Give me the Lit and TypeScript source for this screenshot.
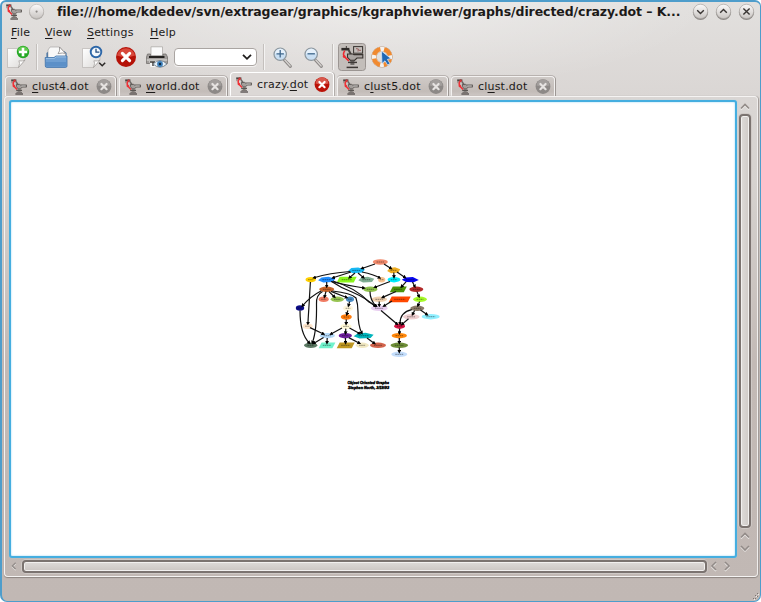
import { LitElement, html, css, svg } from "lit";
import { customElement } from "lit/decorators.js";

type Shape = "e" | "p" | "h" | "d";
type GNode = [number, number, number, string, Shape];

const NODES: GNode[] = [
  [380.3, 262, 7.5, "#f08a6c", "e"],
  [356.5, 270.4, 8.5, "#18b8f4", "h"],
  [393.7, 270.3, 6.5, "#efae22", "h"],
  [310.7, 279.7, 5.2, "#ffd000", "e"],
  [326.7, 279.7, 8.6, "#1e8cff", "h"],
  [346.7, 279.7, 10, "#8cf51c", "p"],
  [366.3, 279.7, 8, "#7fae93", "h"],
  [381.7, 279.7, 3.6, "#f6c492", "e"],
  [394, 279.7, 6.4, "#00eeff", "e"],
  [410.3, 279.7, 8.5, "#0606f0", "d"],
  [326.7, 289.3, 7.5, "#c9642a", "e"],
  [370.3, 289.3, 7.2, "#8fc24c", "e"],
  [398.3, 289.3, 8.5, "#4c920c", "p"],
  [416.3, 289.3, 7, "#b22a2a", "e"],
  [323.7, 299.3, 5, "#f07c64", "e"],
  [337.3, 299.3, 6.6, "#97c452", "e"],
  [350, 299.2, 4, "#4a8cc4", "e"],
  [379.3, 299.3, 7.8, "#efcfae", "e"],
  [399.7, 299.3, 11, "#ff4800", "p"],
  [420, 299.3, 6.8, "#a6fa2a", "e"],
  [300, 308, 4.2, "#0c0c86", "e"],
  [348, 308.3, 4.8, "#fff6da", "e"],
  [379.3, 308.3, 8.5, "#e8cdf0", "e"],
  [417.3, 308.3, 7, "#8b7a68", "e"],
  [346.3, 317, 5.5, "#ff7d0e", "e"],
  [411.3, 316.8, 8.3, "#efcfd0", "e"],
  [430.7, 316.7, 9, "#90efff", "e"],
  [307.7, 326.2, 5, "#ffe6cc", "e"],
  [346, 326.4, 5.6, "#fff8d6", "e"],
  [399.6, 326.2, 5.4, "#d41444", "e"],
  [327.3, 335.7, 7.6, "#b4dafa", "e"],
  [345.3, 335.7, 6.6, "#6c1d9c", "e"],
  [363.6, 335.7, 10, "#00b4bc", "h"],
  [399.3, 335.7, 7.6, "#ff880c", "e"],
  [310.7, 345.3, 6.6, "#5c7a64", "e"],
  [327, 345.3, 8.4, "#70f2cc", "p"],
  [345.7, 345.3, 9, "#bf9822", "p"],
  [362.3, 345.3, 6.4, "#f1e8c2", "e"],
  [378, 345.3, 8, "#d2644c", "e"],
  [399.3, 345.3, 8.8, "#6e8e38", "e"],
  [399.3, 354.3, 8, "#c4defc", "e"],
];

const EDGES = [
  "M375 264 L362 268.5",
  "M384 264 L391 268.4",
  "M350 271.5 Q330 273 314 277.8",
  "M351 272 L333 277.8",
  "M355 273 L349.5 277.6",
  "M358 273 L363.5 277.6",
  "M362 272 Q374 274.5 379.6 277.8",
  "M393.8 272.5 L394 277",
  "M397 272 L405 277.4",
  "M326.7 282 L326.7 286.5",
  "M331 281.5 Q350 286 364 288",
  "M333 281 Q356 288 369 302 L376 306",
  "M332 281.8 Q341 288 352 292 Q366 298 375 306.2",
  "M310.4 282 L307.9 323.6",
  "M390 281.5 L375 287.2",
  "M406 281.8 L401.5 286.8",
  "M412.5 282 L414.8 286.6",
  "M321 291 Q311 296 302.5 305.8",
  "M322.5 291.5 Q316 295 316.5 304 Q317 330 312.4 342.6",
  "M326 291.5 L324.5 296.8",
  "M329 291.6 L334.5 297",
  "M331 291.4 L346.6 297.5",
  "M332.5 291 Q351 293 356 298 Q358 304 358 312 Q358 326 361.8 333",
  "M370 291.5 Q370 300 376 306",
  "M396 291.5 L382.6 297.4",
  "M417 291.6 L419 296.6",
  "M379.2 301.6 L379.3 305.6",
  "M392 301 L384 306",
  "M419.6 301.6 L418 305.6",
  "M349.6 301.6 L348.5 305.6",
  "M347.8 310.5 L346.8 314.4",
  "M346.3 319.4 L346.1 323.8",
  "M414.6 310.4 L412.6 314.4",
  "M420.5 310 L427 314.6",
  "M411.8 309.6 Q400 312 400 323.6",
  "M381 310.5 L397 324",
  "M408.5 318.8 L402 324.4",
  "M300 310.5 Q300 334 309.4 343",
  "M310 327.6 L323.5 334",
  "M342 328 L331 334",
  "M345.8 328.6 L345.5 333.2",
  "M349.5 328 L359.6 333.6",
  "M399.6 328.6 L399.4 333.2",
  "M323.6 337.6 L313.6 343.4",
  "M327.2 338 L327 342.8",
  "M345.4 338 L345.6 342.8",
  "M348.8 337.6 L359.4 343.2",
  "M367 338 L374.4 343.4",
  "M399.3 338 L399.3 342.8",
  "M399.3 347.6 L399.3 351.8",
];

const nodeShape = ([x, y, r, fill, s]: GNode) => {
  const pts = (a: number[][]) => a.map(([dx, dy]) => `${x + dx},${y + dy}`).join(" ");
  if (s === "e") return svg`<ellipse cx=${x} cy=${y} rx=${r} ry="2.7" fill=${fill}/>`;
  if (s === "p")
    return svg`<polygon fill=${fill} points=${pts([[-r + 3, -2.9], [r, -2.9], [r - 3, 2.9], [-r, 2.9]])}/>`;
  if (s === "h")
    return svg`<polygon fill=${fill} points=${pts([[-r, 0.6], [-r * 0.6, -2.3], [r * 0.2, -3], [r, -1], [r * 0.7, 2.2], [-r * 0.4, 2.9]])}/>`;
  return svg`<polygon fill=${fill} points=${pts([[-r, 0], [-r * 0.55, -2.2], [r * 0.3, -2.8], [r, 0.2], [r * 0.4, 2.6], [-r * 0.5, 2.4]])}/>`;
};

const robot = () => html`<svg class="robot" viewBox="0 0 16 16" width="16" height="16">
  <path d="M0.2 1.4 H5.4" stroke="#4a4543" stroke-width="2"/><path d="M3.6 .2 V1.4" stroke="#6a6562" stroke-width="1"/>
  <path d="M0.8 2.4 V4.2 M2 2.4 V3.6" stroke="#8d8885" stroke-width=".9"/>
  <path d="M4.8 2.4 L7 5.6" stroke="#6b6663" stroke-width="1.6"/>
  <path d="M5.4 5.4 H8.6 L9.6 6 H15.7 V8 H11.4 L9.6 9.8 H7 L5.4 7.6Z" fill="#a39e9b" stroke="#55504e" stroke-width=".9"/>
  <path d="M10.5 7 H14.6" stroke="#d6d3d1" stroke-width=".7"/>
  <path d="M8.2 9.6 V13" stroke="#88837f" stroke-width="3"/>
  <path d="M5.2 11.4 H11" stroke="#5b5653" stroke-width="1.3"/>
  <path d="M4.4 15 H12" stroke="#4f4a47" stroke-width="1.3"/><path d="M5.4 13.4 H11" stroke="#716c69" stroke-width="1"/>
  <path d="M2.8 2.4 Q1.4 5.2 3 7.2 L6 10.4" stroke="#ee3036" stroke-width="1.5" fill="none"/>
  <circle cx="3.6" cy="1.8" r="1.2" fill="#d83438"/><circle cx="2.8" cy="7" r="1.2" fill="#ee3036"/>
</svg>`;

const closeIcon = (active: boolean) => html`<svg viewBox="0 0 16 16" width="16" height="16">
  <circle cx="8" cy="7.6" r="7.4" fill=${active ? "#bb1208" : "#8d8987"}/>
  <path d="M1.5 6.6 A6.5 6.3 0 0 1 14.5 6.6 Q8 8.6 1.5 6.6Z" fill=${active ? "#d8584c" : "#a29e9c"}/>
  <path d="M5.4 5 L10.6 10.2 M10.6 5 L5.4 10.2" stroke=${active ? "#fff" : "#e6e3e1"} stroke-width="2.2" stroke-linecap="round"/>
</svg>`;

const sheet = (x: number) => svg`
  <path d="M${x} 48.5 H${x + 17.5} V60 L${x + 11} 67.5 H${x}Z" fill="url(#pg)" stroke="#b9b5b2" stroke-width=".7"/>
  <path d="M${x + 11} 67.5 Q${x + 13} 63 ${x + 11.4} 60.8 Q${x + 15} 61.6 ${x + 17.5} 60Z" fill="#fff" stroke="#9c9895" stroke-width=".7"/>`;

const magnifier = (x: number, plus: boolean) => svg`
  <path d="M${x + 11} 60 L${x + 17} 66.4" stroke="#8b8785" stroke-width="3" stroke-linecap="round"/>
  <path d="M${x + 11.4} 60 L${x + 16.8} 66" stroke="#d6d3d1" stroke-width="1.2" stroke-linecap="round"/>
  <circle cx=${x + 6.8} cy="54.2" r="6.2" fill="#c9dff3" stroke="#8d979e" stroke-width="1.2"/>
  <path d="M${x + 1.6} 54 A5.2 5.2 0 0 1 ${x + 12} 54 Q${x + 6.8} 52 ${x + 1.6} 54Z" fill="#e6f1fb"/>
  <path d=${`M${x + 3.1} 53.8 H${x + 10.5}` + (plus ? `M${x + 6.8} 50.1 V57.5` : "")} stroke="#40688c" stroke-width="1.3"/>`;

@customElement("app-root")
export class AppRoot extends LitElement {
  static styles = css`
    :host { display: block; width: 761px; height: 602px; overflow: hidden; background: #fff;
      font-family: "DejaVu Sans", sans-serif; font-size: 11px; color: #1c1a19; }
    * { box-sizing: border-box; }
    svg { display: block; flex: none; }
    .window { height: 602px; display: flex; flex-direction: column; border: 2px solid #4e9dcb;
      border-right-width: 1.5px; border-bottom-width: 1px; border-radius: 6px 6px 7px 7px;
      background: radial-gradient(ellipse 330px 90px at 50% 0, rgba(255,255,255,.4), rgba(255,255,255,0)),
        linear-gradient(#e2e0de 0, #dad6d4 95px, #d6d2cf 180px, #c3bab6 360px, #c1b8b4 100%); }
    .title { height: 20px; display: flex; align-items: center; padding-left: 4px; flex: none; }
    .title h1 { margin: -1px 0 0 10px; width: 632px; font-size: 12.5px; font-weight: bold; line-height: 18px;
      white-space: pre; letter-spacing: -.075px; }
    .dot { margin-left: 7px; }
    .menu { height: 20px; display: flex; padding-left: 9px; line-height: 22px; letter-spacing: .18px; flex: none; }
    .menu span { display: block; white-space: nowrap; }
    .m1 { width: 34px; } .m2 { width: 42px; } .m3 { width: 63px; }
    u { text-decoration-thickness: 1px; text-underline-offset: 1.5px; text-decoration-skip-ink: none; }
    .tools { height: 30px; display: flex; align-items: center; padding-left: 2px; flex: none; }
    .sep { width: 2px; height: 26px; border-left: 1px solid #c4c0bd; border-right: 1px solid #f4f3f2; }
    .s1 { margin: 0 3px; } .s2 { margin: 0 4px 0 6px; } .s3 { margin: 0 3px; }
    .combo { width: 83px; height: 18px; margin-left: 2px; border-radius: 4px; background: #fff; border: 1px solid #aaa5a2;
      box-shadow: 0 1px 0 #f4f2f1; display: flex; justify-content: flex-end; align-items: center; padding-right: 4px; }
    .tabs { height: 24px; display: flex; align-items: flex-end; padding-left: 3px; flex: none; }
    .tab { height: 20px; display: flex; align-items: center; padding: 0 3px 0 5px; border: 1px solid #f3f1f0;
      border-bottom: 0; border-radius: 4px 4px 0 0; background: linear-gradient(#cfcac7, #c3bcb8 75%, #cdc7c4);
      box-shadow: 1px 0 0 #9d9794, 0 -1px 0 #b8b2af; margin-right: 3px; letter-spacing: .2px; }
    .tab.active { height: 24px; padding-bottom: 0; background: #dcd8d6; border-color: #fff; box-shadow: 1px 0 0 #b3aeab; }
    .tab .label { margin-left: 5px; flex: 1; white-space: nowrap; }
    .pane { height: 481px; margin: 0 2px; border: 1px solid #f5f3f2; border-right-color: #f0eeed; border-radius: 4px;
      box-shadow: 0 1px 1px #8d8682, 1px 0 1px #a39c98; display: grid; flex: none;
      grid-template-columns: 728px 1fr; grid-template-rows: 458px 1fr; padding: 3px 2px 2px 4px; }
    .canvas { border: 2px solid #45aee0; border-radius: 3px; background: #fff; box-shadow: inset 0 0 2px #8ed0f2, 0 0 1px #9ccfe8; }
    .vbar { display: flex; flex-direction: column; align-items: center; padding: 1px 3px 0 0; }
    .thumb { flex: none; border: 2px solid #7b7370; border-radius: 4px; box-shadow: inset 0 0 0 1px #f2f0ef, 0 0 0 1px #cfc9c6; }
    .vthumb { width: 12px; height: 414px; margin: 1px 0 2px; background: linear-gradient(90deg, #dedbd9, #cfcac7); }
    .hbar { display: flex; align-items: center; padding-bottom: 0; grid-column: 1 / 3; grid-row: 2; }
    .hthumb { width: 685px; height: 13px; background: linear-gradient(#dedbd9, #cbc5c2); margin: 0 1px 0 3px; }
    .right { margin-left: 1px; }
    .status { flex: 1; display: flex; justify-content: flex-end; align-items: flex-end; padding: 0 1px 1px 0; }
    .cap { font: italic bold 4px "Liberation Sans", sans-serif; }
  `;

  private tab(w: number, pre: string, key: string, post: string, active = false) {
    return html`<div class="tab ${active ? "active" : ""}" style="width:${w}px">
      ${robot()}<span class="label">${pre}<u>${key}</u>${post}</span>${closeIcon(active)}
    </div>`;
  }

  private chev(d: string, w = 12, h = 12) {
    return html`<svg viewBox="0 0 12 12" width=${w} height=${h}>
      <path d=${d} transform="translate(0 1)" fill="none" stroke="#f0eeec" stroke-width="1.5"/>
      <path d=${d} fill="none" stroke="#928b88" stroke-width="1.6"/></svg>`;
  }

  private winButton(d: string) {
    return html`<svg viewBox="0 0 23 20" width="23" height="20">
      <circle cx="11.5" cy="10.4" r="7.6" fill="#8d8986"/>
      <circle cx="11.5" cy="9.4" r="7.2" fill="url(#btn2)" stroke="#aaa6a3" stroke-width=".7"/>
      <path d=${d} transform="translate(0 -.4)" fill="none" stroke="#383432" stroke-width="1.4"/>
      <defs><linearGradient id="btn2" x2="0" y2="1"><stop stop-color="#fbfafa"/><stop offset="1" stop-color="#c9c5c2"/></linearGradient></defs></svg>`;
  }

  render() {
    return html`<div class="window">
      <div class="title">
        ${robot()}
        <svg class="dot" viewBox="0 0 18 20" width="18" height="20">
          <defs><linearGradient id="btn" x2="0" y2="1"><stop stop-color="#fbfafa"/><stop offset="1" stop-color="#c9c5c2"/></linearGradient></defs>
          <circle cx="7.6" cy="10.4" r="7.3" fill="#aaa6a3"/><circle cx="7.6" cy="9.4" r="7.1" fill="url(#btn)" stroke="#b5b1ae" stroke-width=".6"/>
          <circle cx="7.6" cy="9.6" r="1.1" fill="#8c8885"/>
        </svg>
        <h1>file:///home/kdedev/svn/extragear/graphics/kgraphviewer/graphs/directed/crazy.dot – K...</h1>
        ${this.winButton("M8.2 8.6 L11.5 11.8 L14.8 8.6")}
        ${this.winButton("M8.2 11.2 L11.5 8 L14.8 11.2")}
        ${this.winButton("M8.4 6.8 L14.6 13 M14.6 6.8 L8.4 13")}
      </div>
      <div class="menu">
        <span class="m1"><u>F</u>ile</span><span class="m2"><u>V</u>iew</span><span class="m3"><u>S</u>ettings</span><span><u>H</u>elp</span>
      </div>
      <div class="tools">
        <svg viewBox="4 42 29 30" width="29" height="30">
          <defs><linearGradient id="pg" x2="1" y2="1"><stop stop-color="#fff"/><stop offset="1" stop-color="#dcdad8"/></linearGradient></defs>
          ${sheet(7.5)}
          <circle cx="23" cy="52" r="6.2" fill="#24a824"/><path d="M17.5 51 A5.6 5.6 0 0 1 28.5 51Z" fill="#5fca4c"/>
          <path d="M23 47.8 V56.2 M18.8 52 H27.2" stroke="#fff" stroke-width="2.6"/>
        </svg>
        <div class="sep s1"></div>
        <svg viewBox="41 42 31 30" width="31" height="30">
          <path d="M46.5 53 L49 51 H64 L66.5 53 V60 H46.5Z" fill="#2f659d"/>
          <path d="M48 58 V50 L50 47 H59.5 L65.5 53.5 V58Z" fill="#f8f8f8" stroke="#aaa8a6" stroke-width=".7"/>
          <path d="M59.5 47 Q60.4 51.5 58 53.6 Q63 52.4 65.5 53.5Z" fill="#fff" stroke="#8a8785" stroke-width=".8"/>
          <path d="M45.2 57.5 H54 L56 56 H67 V66 Q67 67.4 65.5 67.4 H46.8 Q45.3 67.4 45.3 66Z" fill="#6f9fd2" stroke="#3a6fa8" stroke-width=".8"/>
          <path d="M46 62 H66.4 V66.4 H46Z" fill="#5c90c8"/><path d="M46 58.4 H54.4 L56.2 56.9 H66.2" fill="none" stroke="#a9caea" stroke-width=".8"/>
        </svg>
        <svg viewBox="72 42 40 30" width="40" height="30">
          ${sheet(82.5)}
          <circle cx="96" cy="52" r="5.3" fill="#f4f8fc" stroke="#2d67a8" stroke-width="1.9"/>
          <path d="M96 48.8 V52.2 H99.4" fill="none" stroke="#244e80" stroke-width="1.3"/>
          <path d="M99.2 62.8 L102.2 65.8 L105.2 62.8" fill="none" stroke="#2b2826" stroke-width="1.5"/>
        </svg>
        <svg viewBox="112 42 28 30" width="28" height="30">
          <circle cx="126" cy="57" r="10" fill="#b51208"/><path d="M117 55.5 A9.2 9.2 0 0 1 135 55.5 Q126 59 117 55.5Z" fill="#d8493c"/>
          <path d="M122.4 53.4 L129.6 60.6 M129.6 53.4 L122.4 60.6" stroke="#fff" stroke-width="3.1" stroke-linecap="round"/>
        </svg>
        <svg viewBox="140 42 32 30" width="32" height="30">
          <path d="M151 46.8 H162.5 V56 H151Z" fill="#fafafa" stroke="#a6a3a1" stroke-width=".7"/>
          <path d="M147.5 54 H150.5 V56 H163 V54 H166 L167.5 57 V63.5 H146.5 V57Z" fill="#a29e9c" stroke="#6c6866" stroke-width=".7"/>
          <path d="M149 56 H164.5 V58 H149Z" fill="#242220"/>
          <path d="M146.8 60 H167.2" stroke="#dad8d6" stroke-width="1.2"/>
          <path d="M149.5 61 H157 V67 H150.5Z" fill="#f7f7f7"/><path d="M150 62 L155 62 M153 62 V66" stroke="#3b3835" stroke-width="1.4"/>
          <path d="M153 64 Q160 57 167 64 Q160 70.5 153 64Z" fill="#e4eff8" stroke="#6e7b86" stroke-width=".9"/>
          <circle cx="160" cy="64" r="2.9" fill="#3d7fb9"/><circle cx="160" cy="64" r="1.2" fill="#0c2740"/>
        </svg>
        <div class="combo"><svg viewBox="0 0 10 8" width="10" height="8"><path d="M1 1.8 L5 5.8 L9 1.8" fill="none" stroke="#1f1d1c" stroke-width="1.8"/></svg></div>
        <div class="sep s2"></div>
        <svg viewBox="268 42 30 30" width="30" height="30">${magnifier(272.4, true)}</svg>
        <svg viewBox="298 42 30 30" width="30" height="30">${magnifier(303.4, false)}</svg>
        <div class="sep s3"></div>
        <svg viewBox="336 42 30 30" width="30" height="30">
          <rect x="337.5" y="43.5" width="27" height="27" rx="3" fill="#c3beba" stroke="#9b9592"/>
          <rect x="352.6" y="46.6" width="9" height="6.6" fill="#c3bebb" stroke="#37322f"/>
          <path d="M355 48.6 L357.4 49 L357 51.5 M358 50.3 H360" stroke="#8a4845" stroke-width=".8" fill="none"/>
          <path d="M340.4 49.2 H348.4" stroke="#302c2a" stroke-width="2.6"/><path d="M345.4 46 V48" stroke="#55504d" stroke-width="1.2"/>
          <path d="M347.6 50 L350 54.4" stroke="#4a4542" stroke-width="2"/>
          <path d="M346.5 54 H352 L353 54.6 H361.8 V58 H356 L353.5 60.4 H349.4 L346.5 57.4Z" fill="#aaa5a2" stroke="#38332f" stroke-width="1.1"/>
          <path d="M351.4 60.5 V65" stroke="#6b6663" stroke-width="4"/>
          <path d="M345.6 67.4 H357" stroke="#3b3633" stroke-width="1.5"/><path d="M347 62.4 H356" stroke="#3f3a37" stroke-width="1.4"/>
          <path d="M347 65.4 H355.6" stroke="#c5c0bd" stroke-width="1"/>
          <path d="M343.8 50.6 Q341.4 54 343.4 56.6 L347.8 60.8" stroke="#ee2a30" stroke-width="1.6" fill="none"/>
          <circle cx="343.2" cy="56.6" r="1.4" fill="#ee2a30"/>
        </svg>
        <svg viewBox="366 42 30 30" width="30" height="30">
          <circle cx="381" cy="57" r="8" fill="none" stroke="#b08a6c" stroke-width="5.2"/>
          <circle cx="381" cy="57" r="8" fill="none" stroke="#f6f2ee" stroke-width="4.4"/>
          <circle cx="381" cy="57" r="8" fill="none" stroke="#f08a30" stroke-width="4.4" stroke-dasharray="8.8 3.766" stroke-dashoffset="-1.9"/>
          <path d="M380.4 51 L390 58.6 L386.4 59.4 L389 63.6 L386.6 65 L384 60.8 L381 63.6Z" fill="#1f67b4" stroke="#d5e6f6" stroke-width=".8"/>
        </svg>
      </div>
      <div class="tabs">
        ${this.tab(111, "", "c", "lust4.dot")}
        ${this.tab(108, "", "w", "orld.dot")}
        ${this.tab(104, "crazy.", "d", "ot", true)}
        ${this.tab(111, "c", "l", "ust5.dot")}
        ${this.tab(104, "cl", "u", "st.dot")}
      </div>
      <div class="pane">
        <div class="canvas">
          <svg viewBox="11 102 724 454" width="724" height="454">
            <defs><marker id="arr" viewBox="0 0 4 4" refX="2" refY="2" markerWidth="3.8" markerHeight="3.8" markerUnits="userSpaceOnUse" orient="auto"><path d="M0 0 L4 2 L0 4Z" fill="#000"/></marker></defs>
            ${NODES.map(nodeShape)}
            ${EDGES.map((d) => svg`<path d=${d} fill="none" stroke="#111" stroke-width="1.2" marker-end="url(#arr)"/>`)}
            ${NODES.map(([x, y, r]) => svg`<path d="M${x - r * 0.5} ${y} H${x + r * 0.5}" stroke="#000" stroke-opacity=".5" stroke-width=".8" stroke-dasharray="1.6 .5"/>`)}
            <g class="cap" stroke="#000" stroke-width=".4">
              <text x="347.5" y="384.2" textLength="41.5" lengthAdjust="spacingAndGlyphs">Object Oriented Graphs</text>
              <text x="348" y="389" textLength="41" lengthAdjust="spacingAndGlyphs">Stephen North, 3/19/93</text>
            </g>
          </svg>
        </div>
        <div class="vbar">
          ${this.chev("M2 7.5 L6 3.5 L10 7.5")}
          <div class="thumb vthumb"></div>
          ${this.chev("M2 7.5 L6 3.5 L10 7.5")}
          ${this.chev("M2 4 L6 8 L10 4")}
        </div>
        <div class="hbar">
          ${this.chev("M8 2 L4 6 L8 10", 10, 12)}
          <div class="thumb hthumb"></div>
          ${this.chev("M8 2 L4 6 L8 10")}
          <div class="right">${this.chev("M4 2 L8 6 L4 10")}</div>
        </div>
      </div>
      <div class="status">
        <svg viewBox="0 0 7 7" width="7" height="7">
          <path d="M5 0h1v1h-1z M3 2h1v1h-1z M5 3h1v1h-1z M1 5h1v1h-1z M3 5h1v1h-1z" fill="#7d7571"/>
          <path d="M6 1h1v1h-1z M4 3h1v1h-1z M2 6h1v1h-1z" fill="#efecea"/>
        </svg>
      </div>
    </div>`;
  }
}
